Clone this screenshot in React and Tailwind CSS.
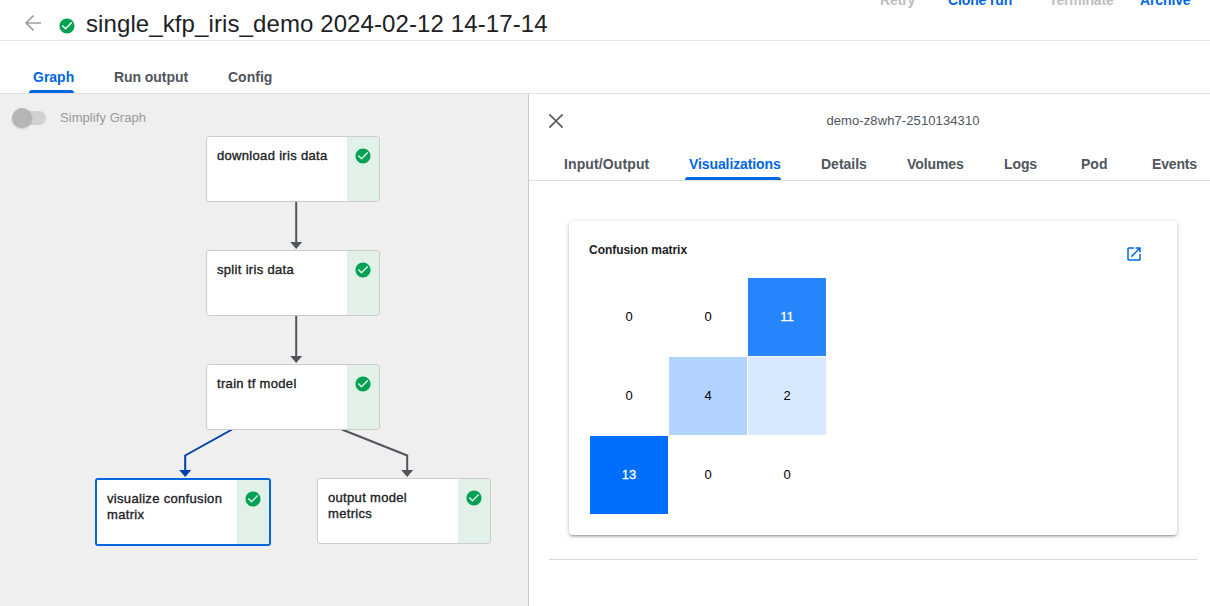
import { MdCheckCircle, MdLaunch } from 'react-icons/md';

const actions = [
  { label: 'Retry', cls: 'ml-[880px] w-[68px] text-[#bdbdbd]' },
  { label: 'Clone run', cls: 'w-[101px] text-[#0067df]' },
  { label: 'Terminate', cls: 'w-[91px] text-[#bdbdbd]' },
  { label: 'Archive', cls: 'w-[60px] text-[#0067df]' },
];

const runTabs = [
  { label: 'Graph', cls: 'w-[81px]', active: true },
  { label: 'Run output', cls: 'w-[114px] tracking-[-0.06px]' },
  { label: 'Config', cls: 'w-[80px]' },
];

const nodeTabs = [
  { label: 'Input/Output', cls: 'w-[125px] tracking-[0.12px]' },
  { label: 'Visualizations', cls: 'w-[132px] tracking-[-0.1px]', active: true },
  { label: 'Details', cls: 'w-[86px]' },
  { label: 'Volumes', cls: 'w-[97px] tracking-[-0.1px]' },
  { label: 'Logs', cls: 'w-[77px] tracking-[-0.1px]' },
  { label: 'Pod', cls: 'w-[71px]' },
  { label: 'Events', cls: 'w-[58px] tracking-[-0.15px]' },
];

const nodes = [
  { label: 'download iris data', pos: 'left-[206px] top-[42px]' },
  { label: 'split iris data', pos: 'left-[206px] top-[156px]' },
  { label: 'train tf model', pos: 'left-[206px] top-[270px]' },
  { label: 'visualize confusion matrix', pos: 'left-[95px] top-[384px]', selected: true },
  { label: 'output model metrics', pos: 'left-[317px] top-[384px]' },
];

const cells = [
  { value: 0, cls: 'text-black' },
  { value: 0, cls: 'text-black' },
  { value: 11, cls: 'bg-[#2684fc] text-white [-webkit-text-stroke:0.3px_white]' },
  { value: 0, cls: 'text-black' },
  { value: 4, cls: 'bg-[#b2d3ff] text-black' },
  { value: 2, cls: 'bg-[#d8e8fe] text-black' },
  { value: 13, cls: 'bg-[#006efc] text-white [-webkit-text-stroke:0.3px_white]' },
  { value: 0, cls: 'text-black' },
  { value: 0, cls: 'text-black' },
];

function Tabs({ items }) {
  return (
    <>
      {items.map((tab) => (
        <div key={tab.label} className={`${tab.cls} flex shrink-0 items-end`}>
          <div className={tab.active ? 'relative text-[#0067df]' : 'relative text-[#50555c]'}>
            <div className="pb-[8px] text-[14px] leading-[16px] font-bold whitespace-nowrap">{tab.label}</div>
            {tab.active && (
              <div className="absolute right-0 bottom-0 -left-[4px] h-[3px] rounded-t-[3px] bg-[#0067df]" />
            )}
          </div>
        </div>
      ))}
    </>
  );
}

function Node({ label, pos, selected }) {
  return (
    <div
      className={`absolute flex overflow-hidden rounded-[3px] bg-white ${pos} ${
        selected ? 'h-[68px] w-[176px] border-2 border-[#0067df]' : 'h-[66px] w-[174px] border border-[#ccc]'
      }`}
    >
      <div className="w-[140px] pt-[11px] pr-[6px] pl-[10px] text-[13px] leading-4 tracking-[0.32px] text-[#202124] [-webkit-text-stroke:0.35px_#202124]">
        {label}
      </div>
      <div className="flex flex-1 justify-center bg-[#e1f1e7] pt-[10px]">
        <MdCheckCircle className="size-[18px] text-[#00a152]" />
      </div>
    </div>
  );
}

function Edges() {
  return (
    <svg className="absolute top-0 left-0" width="528" height="512" fill="none" strokeWidth="2">
      <g stroke="#50555c">
        <path d="M296.2 108V148" />
        <path d="M296.2 222V262" />
        <path d="M342 335.500L407.200 361.500V376" />
      </g>
      <path d="M232 335.500L185.200 361.500V376" stroke="#0040aa" />
      <g fill="#50555c">
        <path d="M290.200 148h12l-6 7z" />
        <path d="M290.200 262h12l-6 7z" />
        <path d="M401.200 376h12l-6 7z" />
      </g>
      <path d="M179.200 376h12l-6 7z" fill="#0040aa" />
    </svg>
  );
}

export default function App() {
  return (
    <div className="flex h-[606px] w-[1210px] flex-col overflow-hidden bg-white font-['Liberation_Sans',Arial,sans-serif] text-[#202124]">
      <header className="flex h-[41px] shrink-0 border-b border-[#e4e4e4]">
        <div className="flex h-full w-0 items-start">
          <svg
            className="mt-[11px] ml-[21px] size-6 shrink-0 text-[#a0a0a0]"
            viewBox="0 0 24 24"
            fill="none"
            stroke="currentColor"
            strokeWidth="1.7"
          >
            <path d="M20 12H5.500M12.500 4.600L5.100 12l7.400 7.400" />
          </svg>
          <MdCheckCircle className="mt-[17px] ml-[13px] size-[18px] shrink-0 text-[#00a152]" />
          <h1 className="mt-[10px] ml-[10px] text-[24px] leading-[28px] tracking-[0.1px] whitespace-nowrap">
            single_kfp_iris_demo 2024-02-12 14-17-14
          </h1>
        </div>
        <div className="-mt-[8px] flex text-[14px] leading-[16px] font-bold tracking-[-0.13px]">
          {actions.map((a) => (
            <div key={a.label} className={`${a.cls} shrink-0 whitespace-nowrap`}>
              {a.label}
            </div>
          ))}
        </div>
      </header>

      <nav className="flex h-[53px] shrink-0 border-b border-[#e0e0e0] pl-[33px]">
        <Tabs items={runTabs} />
      </nav>

      <main className="flex min-h-0 flex-1">
        <section className="relative w-[529px] shrink-0 border-r border-[#ccc] bg-[#efefef]">
          <div className="flex items-center pt-[14px] pl-[12px]">
            <div className="flex h-[20px] w-[34px] items-center">
              <div className="z-10 size-[20px] shrink-0 rounded-full bg-[#b5b5b5] shadow-[0_1px_2px_rgba(0,0,0,0.2)]" />
              <div className="-ml-[10px] h-[14px] w-[24px] shrink-0 rounded-r-full bg-[#d2d2d2]" />
            </div>
            <span className="ml-[14px] text-[13px] leading-5 tracking-[0.06px] text-[#999]">Simplify Graph</span>
          </div>
          <Edges />
          {nodes.map((n) => (
            <Node key={n.label} {...n} />
          ))}
        </section>

        <section className="flex min-w-0 flex-1 flex-col">
          <div className="flex h-[34px] shrink-0 items-end">
            <svg
              className="-mb-[5px] ml-[15px] size-6 shrink-0 text-[#50555c]"
              viewBox="0 0 24 24"
              fill="none"
              stroke="currentColor"
              strokeWidth="1.5"
            >
              <path d="M5.400 5.400l13.200 13.200M18.600 5.400L5.400 18.600" />
            </svg>
            <div className="flex-1 pl-[28px] text-center text-[13px] leading-[15px] tracking-[0.1px] text-[#50555c]">
              demo-z8wh7-2510134310
            </div>
          </div>
          <div className="flex h-[53px] shrink-0 border-b border-[#e0e0e0] pl-[35px]">
            <Tabs items={nodeTabs} />
          </div>
          <div className="mt-[40px] mr-[13px] ml-[20px] flex h-[339px] flex-col border-b border-[#d8d8d8] px-[20px]">
            <div className="h-[314px] rounded-[4px] px-[20px] pt-[21px] shadow-[0_1px_5px_0_rgba(0,0,0,0.2),0_2px_2px_0_rgba(0,0,0,0.14),0_3px_1px_-2px_rgba(0,0,0,0.12)]">
              <div className="flex h-[36px] justify-between">
                <h2 className="text-[12px] leading-4 font-bold tracking-[-0.04px]">Confusion matrix</h2>
                <MdLaunch className="mt-[3px] mr-[14px] size-[18px] text-[#0067df]" />
              </div>
              <div className="ml-[1px] grid w-[236px] grid-cols-[78px_78px_78px] grid-rows-[78px_78px_78px] gap-px text-[13px]">
                {cells.map((c, i) => (
                  <div key={i} className={`flex items-center justify-center ${c.cls}`}>
                    {c.value}
                  </div>
                ))}
              </div>
            </div>
          </div>
        </section>
      </main>
    </div>
  );
}
